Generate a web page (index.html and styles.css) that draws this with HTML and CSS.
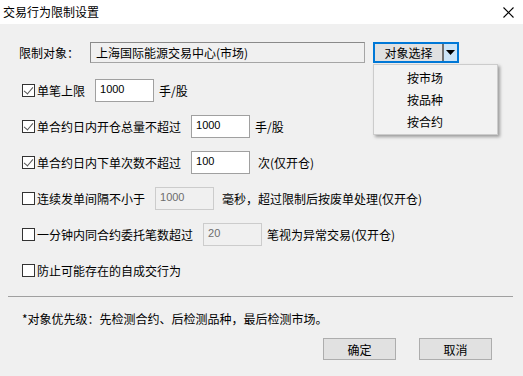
FILE: index.html
```html
<!DOCTYPE html>
<html lang="zh-CN">
<head>
    <meta charset="UTF-8">
    <title>交易行为限制设置</title>
    <link rel="stylesheet" href="styles.css">
</head>
<body>
    <div class="dialog">
        <div class="titlebar">
            <span class="title">交易行为限制设置</span>
            <svg class="close" width="11" height="11" viewBox="0 0 11 11">
                <path d="M0.5 0.5 L10.5 10.5 M10.5 0.5 L0.5 10.5" stroke="#000" stroke-width="1.1"/>
            </svg>
        </div>

        <div class="content">
            <div class="target-row">
                <span class="target-label">限制对象：</span>
                <div class="target-box">上海国际能源交易中心(市场)</div>
                <div class="select-btn">
                    <span class="select-text">对象选择</span>
                    <span class="select-arrow">
                        <svg width="9" height="5" viewBox="0 0 9 5"><path d="M0 0 H9 L4.5 5 Z" fill="#000"/></svg>
                    </span>
                </div>
                <ul class="menu">
                    <li>按市场</li>
                    <li>按品种</li>
                    <li>按合约</li>
                </ul>
            </div>

            <div class="rules">
                <div class="rule">
                    <span class="check on"></span>
                    <span class="rule-text">单笔上限</span>
                    <span class="field">1000</span>
                    <span class="unit">手/股</span>
                </div>
                <div class="rule">
                    <span class="check on"></span>
                    <span class="rule-text">单合约日内开仓总量不超过</span>
                    <span class="field">1000</span>
                    <span class="unit">手/股</span>
                </div>
                <div class="rule">
                    <span class="check on"></span>
                    <span class="rule-text">单合约日内下单次数不超过</span>
                    <span class="field">100</span>
                    <span class="unit wide">次(仅开仓)</span>
                </div>
                <div class="rule">
                    <span class="check"></span>
                    <span class="rule-text">连续发单间隔不小于</span>
                    <span class="field disabled">1000</span>
                    <span class="unit wide">毫秒，超过限制后按废单处理(仅开仓)</span>
                </div>
                <div class="rule">
                    <span class="check"></span>
                    <span class="rule-text">一分钟内同合约委托笔数超过</span>
                    <span class="field disabled">20</span>
                    <span class="unit">笔视为异常交易(仅开仓)</span>
                </div>
                <div class="rule">
                    <span class="check"></span>
                    <span class="rule-text">防止可能存在的自成交行为</span>
                </div>
            </div>

            <div class="separator"></div>

            <p class="note">*对象优先级：先检测合约、后检测品种，最后检测市场。</p>

            <div class="actions">
                <button class="btn">确定</button>
                <button class="btn">取消</button>
            </div>
        </div>
    </div>
</body>
</html>
```

FILE: styles.css
```css
* {
    box-sizing: border-box;
}
body {
    margin: 0;
    padding: 0;
    font-family: "Noto Sans CJK SC", "Noto Sans", sans-serif;
    font-size: 12px;
    color: #000;
    background: #f0f0f0;
}
.dialog {
    width: 523px;
    height: 376px;
    background: #f0f0f0;
    overflow: hidden;
}
.titlebar {
    height: 24px;
    background: #fff;
    display: flex;
    align-items: center;
    justify-content: space-between;
    padding: 0 9px 0 3px;
}
.title {
    font-size: 12px;
    line-height: 24px;
}
.content {
    padding: 0 8px;
    position: relative;
}
.target-row {
    display: flex;
    align-items: center;
    height: 21px;
    margin-top: 18px;
    position: relative;
}
.target-label {
    width: 82px;
    padding-left: 11px;
}
.target-box {
    width: 275px;
    height: 21px;
    border: 1px solid #a5a5a5;
    border-top-color: #8a8a8a;
    border-left-color: #8a8a8a;
    padding-left: 5px;
    line-height: 19px;
    background: #f0f0f0;
}
.select-btn {
    margin-left: 8px;
    width: 86px;
    height: 21px;
    border: 2px solid #0078d7;
    display: flex;
    background: #e1e1e1;
}
.select-text {
    width: 69px;
    text-align: center;
    line-height: 17px;
    border-right: 2px solid #707070;
}
.select-arrow {
    flex: 1;
    background: #cce4f7;
    display: flex;
    align-items: center;
    justify-content: center;
}
.menu {
    list-style: none;
    margin: 0;
    padding: 2px 0 0;
    position: absolute;
    left: 365px;
    top: 22px;
    width: 125px;
    height: 71px;
    background: #f2f2f2;
    border: 1px solid #cccccc;
    box-shadow: 2px 2px 3px rgba(0, 0, 0, 0.35);
    z-index: 2;
}
.menu li {
    height: 22px;
    line-height: 22px;
    padding-left: 33px;
}
.rules {
    display: flex;
    flex-direction: column;
    gap: 13px;
    margin-top: 16px;
}
.rule {
    display: flex;
    align-items: center;
    height: 23px;
}
.check {
    width: 13px;
    height: 13px;
    margin-left: 14px;
    margin-right: 2px;
    border: 1px solid #333;
    background: #fff;
    position: relative;
}
.check.on::after {
    content: "";
    position: absolute;
    left: 3px;
    top: 0px;
    width: 4px;
    height: 8px;
    border-right: 1.5px solid #555;
    border-bottom: 1.5px solid #555;
    transform: rotate(40deg);
}
.field {
    width: 59px;
    height: 23px;
    margin-left: 10px;
    border: 1px solid #a0a0a0;
    background: #fff;
    padding: 2px 0 0 4px;
    font-family: "Liberation Sans", Arial, sans-serif;
    font-size: 11px;
    line-height: 14px;
    color: #000;
}
.field.disabled {
    background: #f0f0f0;
    border-color: #cccccc;
    color: #6d6d6d;
}
.unit {
    margin-left: 5px;
}
.unit.wide {
    margin-left: 8px;
}
.separator {
    margin-top: 14px;
    height: 1px;
    background: #a0a0a0;
    width: 505px;
}
.note {
    margin: 13px 0 0 14px;
    line-height: 17px;
}
.actions {
    display: flex;
    justify-content: flex-end;
    gap: 23px;
    margin-top: 11px;
    padding-right: 23px;
}
.btn {
    width: 73px;
    height: 22px;
    border: 1px solid #adadad;
    background: #e1e1e1;
    font-family: "Noto Sans CJK SC", sans-serif;
    font-size: 12px;
    padding: 0;
    color: #000;
}
```
